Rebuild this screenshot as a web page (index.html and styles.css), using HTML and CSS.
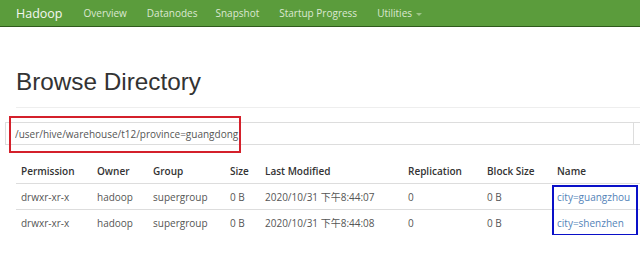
FILE: index.html
```html
<!DOCTYPE html>
<html lang="zh-CN">
<head>
    <meta charset="UTF-8">
    <title>Browsing HDFS</title>
    <link rel="stylesheet" href="styles.css">
</head>
<body>
    <nav class="navbar">
        <span class="brand">Hadoop</span>
        <a href="#">Overview</a>
        <a href="#">Datanodes</a>
        <a href="#">Snapshot</a>
        <a href="#">Startup Progress</a>
        <a href="#" class="dropdown">Utilities <span class="caret"></span></a>
    </nav>

    <div class="content">
        <div class="page-header">
            <h1>Browse Directory</h1>
        </div>

        <div class="path-bar">
            <input type="text" class="path-input" value="/user/hive/warehouse/t12/province=guangdong">
            <button class="go-btn"></button>
            <div class="mark mark-red"></div>
        </div>

        <div class="table-wrap">
            <table class="listing">
                <colgroup>
                    <col style="width:76px">
                    <col style="width:56px">
                    <col style="width:77px">
                    <col style="width:35px">
                    <col style="width:143px">
                    <col style="width:79px">
                    <col style="width:70px">
                    <col style="width:88px">
                </colgroup>
                <thead>
                    <tr>
                        <th>Permission</th>
                        <th>Owner</th>
                        <th>Group</th>
                        <th>Size</th>
                        <th>Last Modified</th>
                        <th>Replication</th>
                        <th>Block Size</th>
                        <th>Name</th>
                    </tr>
                </thead>
                <tbody>
                    <tr>
                        <td>drwxr-xr-x</td>
                        <td>hadoop</td>
                        <td>supergroup</td>
                        <td>0 B</td>
                        <td>2020/10/31 下午8:44:07</td>
                        <td>0</td>
                        <td>0 B</td>
                        <td><a href="#">city=guangzhou</a></td>
                    </tr>
                    <tr>
                        <td>drwxr-xr-x</td>
                        <td>hadoop</td>
                        <td>supergroup</td>
                        <td>0 B</td>
                        <td>2020/10/31 下午8:44:08</td>
                        <td>0</td>
                        <td>0 B</td>
                        <td><a href="#">city=shenzhen</a></td>
                    </tr>
                </tbody>
            </table>
            <div class="mark mark-blue"></div>
        </div>
    </div>
</body>
</html>
```

FILE: styles.css
```css
body {
    margin: 0;
    font-family: "Open Sans", "Noto Sans CJK SC", sans-serif;
    font-size: 10px;
    color: #555;
    background-color: white;
    overflow: hidden;
}
.navbar {
    display: flex;
    align-items: center;
    height: 26px;
    padding-left: 16px;
    background-color: #5b9c3c;
    border-bottom: 1px solid #2f5a1c;
}
.navbar .brand {
    color: #f4f7f2;
    font-size: 12.5px;
    margin-right: 21px;
}
.navbar a {
    color: #dbe8d2;
    text-decoration: none;
    font-size: 10px;
    margin-right: 20px;
    white-space: nowrap;
}
.navbar a:nth-of-type(2) {
    margin-right: 18px;
}
.caret {
    display: inline-block;
    width: 0;
    height: 0;
    margin-left: 1px;
    vertical-align: middle;
    border-top: 3px solid #9cc486;
    border-left: 3px solid transparent;
    border-right: 3px solid transparent;
}
.content {
    padding-left: 16px;
}
.page-header {
    margin-top: 40px;
    padding-bottom: 10px;
    border-bottom: 1px solid #eee;
}
h1 {
    margin: 0;
    font-family: "Liberation Sans", Arial, sans-serif;
    font-size: 24.3px;
    line-height: 30px;
    font-weight: normal;
    color: #333;
}
.path-bar {
    position: relative;
    display: flex;
    margin-top: 14px;
    margin-left: -11px;
}
.path-input {
    width: 628px;
    height: 23px;
    box-sizing: border-box;
    padding: 0 9px;
    border: 1px solid #ddd;
    border-right: none;
    font-family: inherit;
    font-size: 10px;
    color: #555;
    flex-shrink: 0;
}
.go-btn {
    width: 30px;
    height: 23px;
    flex-shrink: 0;
    border: 1px solid #ddd;
    background-color: white;
}
.table-wrap {
    position: relative;
    margin-top: 13px;
}
.listing {
    border-collapse: collapse;
    table-layout: fixed;
    width: 624px;
}
.listing th,
.listing td {
    height: 25px;
    padding: 0 5px;
    text-align: left;
    white-space: nowrap;
}
.listing th {
    color: #333;
    font-weight: 600;
    border-bottom: 1px solid #ddd;
}
.listing tbody tr:first-child td {
    border-bottom: 1px solid #ddd;
}
.listing a {
    color: #5383b8;
    text-decoration: none;
}
.mark {
    position: absolute;
    box-sizing: border-box;
}
.mark-red {
    left: 4px;
    top: -6px;
    width: 232px;
    height: 37px;
    border: 2px solid #d4202b;
}
.mark-blue {
    left: 536px;
    top: 27px;
    width: 86px;
    height: 51px;
    border: 2px solid #0a10c8;
}
```
